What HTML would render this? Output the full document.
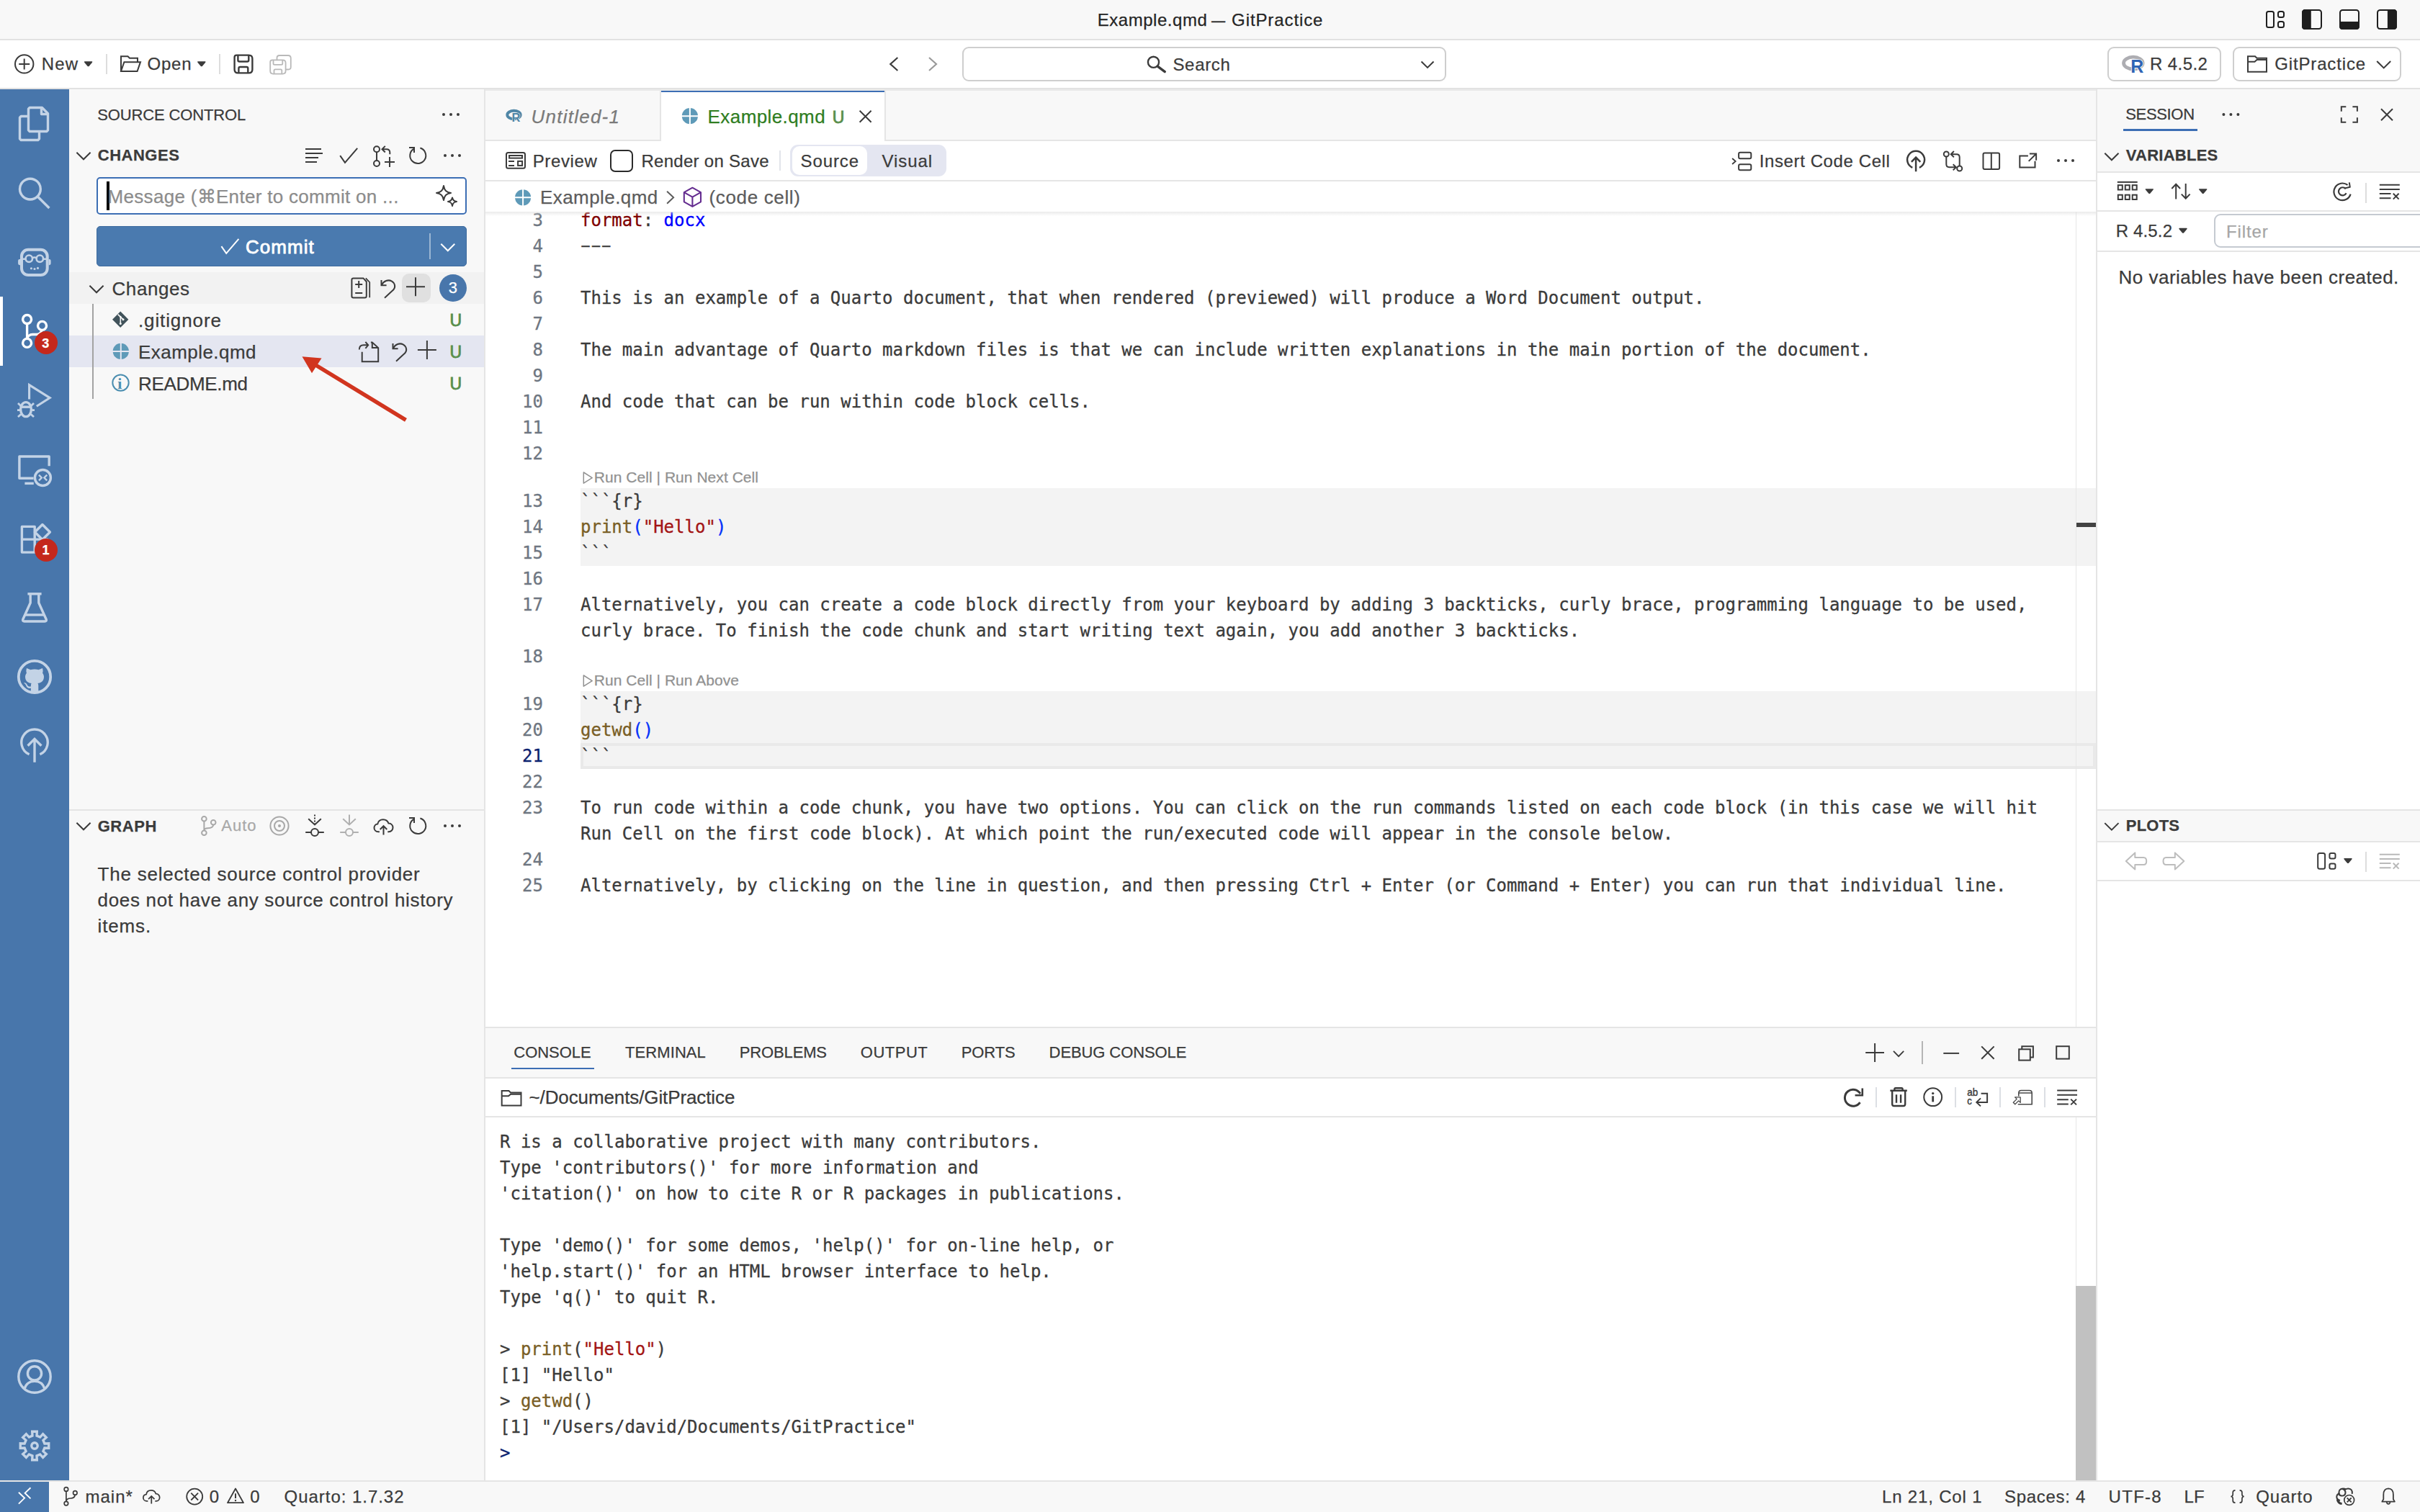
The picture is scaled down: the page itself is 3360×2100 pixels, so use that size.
<!DOCTYPE html><html lang="en"><head><meta charset="utf-8"><title>Example.qmd — GitPractice</title><style>
*{box-sizing:border-box;margin:0;padding:0}
html,body{width:3360px;height:2100px;overflow:hidden;background:#fff}
body{font-family:"Liberation Sans",sans-serif;font-size:26px;color:#3b3b3b;position:relative}
.a{position:absolute}
.t{position:absolute;white-space:pre;line-height:1;-webkit-text-stroke:0.25px currentColor}
.m{-webkit-text-stroke:0.3px currentColor}
svg{position:absolute;overflow:visible}
@media (max-width:1800px){html{zoom:.5}}
.m{font-family:"DejaVu Sans Mono","Liberation Mono",monospace}
</style></head><body>
<!-- sec_frame -->
<div class="a" style="left:0px;top:0px;width:3360px;height:54px;background:#f8f8f8;"></div>
<div class="a" style="left:0px;top:54px;width:3360px;height:2px;background:#e2e2e2;"></div>
<div class="a" style="left:0px;top:56px;width:3360px;height:66px;background:#ffffff;"></div>
<div class="a" style="left:0px;top:122px;width:3360px;height:2px;background:#e2e2e2;"></div>
<div class="a" style="left:0px;top:124px;width:96px;height:1932px;background:#4876ab;"></div>
<div class="a" style="left:96px;top:124px;width:576px;height:1932px;background:#f8f8f8;"></div>
<div class="a" style="left:672px;top:124px;width:2px;height:1932px;background:#e5e5e5;"></div>
<div class="a" style="left:674px;top:124px;width:2236px;height:1302px;background:#ffffff;"></div>
<div class="a" style="left:2910px;top:124px;width:2px;height:1932px;background:#e5e5e5;"></div>
<div class="a" style="left:2912px;top:124px;width:448px;height:1932px;background:#ffffff;"></div>
<div class="a" style="left:674px;top:1426px;width:2236px;height:2px;background:#e5e5e5;"></div>
<div class="a" style="left:674px;top:1428px;width:2236px;height:628px;background:#ffffff;"></div>
<div class="a" style="left:0px;top:2056px;width:3360px;height:44px;background:#f8f8f8;"></div>
<div class="a" style="left:0px;top:2056px;width:3360px;height:2px;background:#e5e5e5;"></div>
<!-- sec_top -->
<span class="t" style="left:1523.7px;top:16.0px;font-size:24px;color:#252525;letter-spacing:0.54px;">Example.qmd</span>
<span class="t" style="left:1682.3px;top:16.0px;font-size:24px;color:#252525;transform-origin:0 50%;transform:scaleX(0.8);">—</span>
<span class="t" style="left:1710.1px;top:16.0px;font-size:24px;color:#252525;letter-spacing:0.90px;">GitPractice</span>
<span class="t" style="left:57.7px;top:77.0px;font-size:24px;color:#3b3b3b;letter-spacing:1.20px;">New</span>
<span class="t" style="left:204.5px;top:77.0px;font-size:24px;color:#3b3b3b;letter-spacing:0.80px;">Open</span>
<div class="a" style="left:147px;top:75px;width:2px;height:28px;background:#dddddd;"></div>
<div class="a" style="left:304px;top:75px;width:2px;height:28px;background:#dddddd;"></div>
<div class="a" style="left:1336px;top:65px;width:672px;height:48px;background:#fff;border:2px solid #cecece;border-radius:9px;"></div>
<span class="t" style="left:1628.4px;top:78.0px;font-size:24px;color:#3b3b3b;letter-spacing:0.69px;">Search</span>
<div class="a" style="left:2926px;top:65px;width:158px;height:48px;background:#fff;border:2px solid #cecece;border-radius:9px;"></div>
<span class="t" style="left:2985.0px;top:77.4px;font-size:24px;color:#3b3b3b;letter-spacing:0.42px;">R 4.5.2</span>
<div class="a" style="left:3100px;top:65px;width:234px;height:48px;background:#fff;border:2px solid #cecece;border-radius:9px;"></div>
<span class="t" style="left:3158.2px;top:77.4px;font-size:24px;color:#3b3b3b;letter-spacing:0.86px;">GitPractice</span>
<!-- sec_activity -->
<svg class="a" style="left:24px;top:148px;" width="48" height="48" viewBox="0 0 24 24" fill="none" stroke="#c3d3e6" stroke-width="1.7" stroke-linejoin="round" stroke-linecap="butt"><path d="M7.75 1.6 L8.6 .75 H17.2 L21.25 4.8 V16.4 L20.4 17.25 H8.6 L7.75 16.4 Z"/><path d="M16.75 .9 V5.25 H21.1"/><path d="M7.75 6.75 H2.6 L1.75 7.6 V22.4 L2.6 23.25 H14.4 L15.25 22.4 V17.25"/></svg>
<svg class="a" style="left:24px;top:244px;" width="48" height="48" viewBox="0 0 24 24" fill="none" stroke="#c3d3e6" stroke-width="1.7" stroke-linejoin="round" stroke-linecap="butt"><circle cx="8.95" cy="9.3" r="7.2"/><path d="M14 14.4 L22.2 22.5"/></svg>
<svg class="a" style="left:24px;top:340px;" width="48" height="48" viewBox="0 0 24 24" fill="none" stroke="#c3d3e6" stroke-width="1.7" stroke-linejoin="round" stroke-linecap="butt"><rect x="3" y="3.4" width="17.85" height="17.6" rx="4.6" stroke-width="2"/><path d="M2 9.95 H1.6 Q.55 9.95 .55 11 V13.05 Q.55 14.1 1.6 14.1 H2 Z M21.85 9.95 H22.25 Q23.3 9.95 23.3 11 V13.05 Q23.3 14.1 22.25 14.1 H21.85 Z" fill="#c3d3e6" stroke="none"/><circle cx="8.15" cy="9.6" r="2.35" stroke-width="1.3"/><circle cx="15.65" cy="9.6" r="2.35" stroke-width="1.3"/><path d="M10.3 9.1 Q11.9 8.3 13.5 9.1 M3.8 9.85 H5.9 M17.9 9.85 H20" stroke-width="1.25"/><circle cx="9.7" cy="16.4" r=".78" fill="#c3d3e6" stroke="none"/><circle cx="12" cy="16.75" r=".78" fill="#c3d3e6" stroke="none"/><circle cx="14.25" cy="16.2" r=".78" fill="#c3d3e6" stroke="none"/></svg>
<div class="a" style="left:0px;top:412px;width:4px;height:96px;background:#ffffff;"></div>
<svg class="a" style="left:24px;top:436px;" width="48" height="48" viewBox="0 0 24 24" fill="none" stroke="#ffffff" stroke-width="1.7" stroke-linejoin="round" stroke-linecap="butt"><circle cx="6.8" cy="3.75" r="3"/><circle cx="17.27" cy="8.2" r="3"/><circle cx="6.8" cy="20.2" r="3"/><path d="M6.8 6.75 V17.2"/><path d="M17 11.2 C16.6 13.2 15 14.25 13.4 14.25 H10.6 C8.6 14.25 7 15.6 6.85 17.2"/></svg>
<div class="a" style="left:48px;top:460px;width:32px;height:32px;background:#c4281c;border-radius:16px;"></div>
<span class="t" style="left:58.3px;top:467.5px;font-size:18px;color:#fff;font-weight:700;">3</span>
<svg class="a" style="left:24px;top:532px;" width="48" height="48" viewBox="0 0 24 24" fill="none" stroke="#c3d3e6" stroke-width="1.7" stroke-linejoin="round" stroke-linecap="butt"><path d="M8.3 11.2 V1.3 L22.6 10.3 L13.4 16.1" stroke-linejoin="miter" stroke-width="1.55"/><ellipse cx="6" cy="18.3" rx="3.7" ry="5" /><path d="M2.6 16.6 H9.4" /><path d="M0.5 14 L2.6 16 M11.5 14 L9.4 16 M0 18.8 H2.3 M9.7 18.8 H12 M0.5 23.5 L2.6 21.6 M11.5 23.5 L9.4 21.6" stroke-width="1.4"/></svg>
<svg class="a" style="left:24px;top:628px;" width="48" height="48" viewBox="0 0 24 24" fill="none" stroke="#c3d3e6" stroke-width="1.7" stroke-linejoin="round" stroke-linecap="butt"><path d="M22.1 9.6 V3 H1.45 V18.1 H11.3"/><path d="M5.2 21.7 H11.4"/><circle cx="17.7" cy="17.75" r="5.5"/><path d="M15 15.8 L16.9 17.75 L15 19.7 M20.6 15.8 L18.7 17.75 L20.6 19.7" stroke-width="1.2" stroke-linejoin="miter"/></svg>
<svg class="a" style="left:24px;top:724px;" width="48" height="48" viewBox="0 0 24 24" fill="none" stroke="#c3d3e6" stroke-width="1.7" stroke-linejoin="round" stroke-linecap="butt"><path d="M3.2 3.7 H12.1 V21.55 H3.2 Z M3.2 12.55 H20.95 V21.55 H12.1"/><path d="M17.45 2.25 L22.7 7.5 L17.45 12.75 L12.2 7.5 Z"/></svg>
<div class="a" style="left:48px;top:748px;width:32px;height:32px;background:#c4281c;border-radius:16px;"></div>
<span class="t" style="left:58.4px;top:755.2px;font-size:18px;color:#fff;font-weight:700;">1</span>
<svg class="a" style="left:24px;top:820px;" width="48" height="48" viewBox="0 0 24 24" fill="none" stroke="#c3d3e6" stroke-width="1.7" stroke-linejoin="round" stroke-linecap="butt"><path d="M7.2 2.4 H16.8"/><path d="M9.1 2.4 V8.6 L3.9 20.1 C3.6 21 4 21.5 4.9 21.5 H19.1 C20 21.5 20.4 21 20.1 20.1 L14.9 8.6 V2.4"/><path d="M5.6 17 H18.4"/></svg>
<svg class="a" style="left:24px;top:916px;" width="48" height="48" viewBox="0 0 24 24" fill="none" stroke="#c3d3e6" stroke-width="1.7" stroke-linejoin="round" stroke-linecap="butt"><circle cx="12" cy="12" r="11.1" stroke-width="1.9"/><path d="M6.5 6 L9.2 7.1 C10.9 6.6 13.1 6.6 14.8 7.1 L17.5 6 C17.9 7.3 17.9 8.6 17.5 9.4 C18.2 10.3 18.5 11.2 18.5 12 C18.5 15.3 15.9 16.4 14.2 16.5 C14.5 16.9 14.65 17.4 14.65 18 V22.7 H9.45 V19.9 C7.5 20.2 6.6 19.4 6.1 18.1 C5.8 17.3 5.2 16.8 4.5 16.3 C5.4 15.9 6.4 16.6 6.9 17.6 C7.4 18.6 8.2 19 9.45 18.7 V18 C9.45 17.4 9.6 16.9 9.8 16.5 C8.1 16.4 5.5 15.3 5.5 12 C5.5 11.2 5.8 10.3 6.5 9.4 C6.1 8.6 6.1 7.3 6.5 6 Z" fill="#c3d3e6" stroke="none"/></svg>
<svg class="a" style="left:24px;top:1012px;" width="48" height="48" viewBox="0 0 24 24" fill="none" stroke="#c3d3e6" stroke-width="1.7" stroke-linejoin="round" stroke-linecap="butt"><path d="M8.3 17.9 A9.1 9.1 0 1 1 15.7 17.9"/><path d="M12 7.4 V23.4 M7.3 11.9 L12 7.2 L16.7 11.9" stroke-linejoin="miter"/></svg>
<svg class="a" style="left:24px;top:1888px;" width="48" height="48" viewBox="0 0 24 24" fill="none" stroke="#c3d3e6" stroke-width="1.7" stroke-linejoin="round" stroke-linecap="butt"><circle cx="12" cy="12" r="11.1"/><circle cx="12" cy="9.7" r="4.8"/><path d="M5 20.4 C6.2 16.6 9 15.2 12 15.2 C15 15.2 17.8 16.6 19 20.4"/></svg>
<svg class="a" style="left:24px;top:1984px;" width="48" height="48" viewBox="0 0 24 24" fill="none" stroke="#c3d3e6" stroke-width="1.7" stroke-linejoin="round" stroke-linecap="butt"><path d="M10.48 5.06 L10.36 2.14 L13.64 2.14 L13.52 5.06 L15.83 6.02 L17.81 3.86 L20.14 6.19 L17.98 8.17 L18.94 10.48 L21.86 10.36 L21.86 13.64 L18.94 13.52 L17.98 15.83 L20.14 17.81 L17.81 20.14 L15.83 17.98 L13.52 18.94 L13.64 21.86 L10.36 21.86 L10.48 18.94 L8.17 17.98 L6.19 20.14 L3.86 17.81 L6.02 15.83 L5.06 13.52 L2.14 13.64 L2.14 10.36 L5.06 10.48 L6.02 8.17 L3.86 6.19 L6.19 3.86 L8.17 6.02Z" stroke-linejoin="miter"/><circle cx="12" cy="12" r="2.1"/></svg>
<!-- sec_sidebar -->
<span class="t" style="left:135.2px;top:148.9px;font-size:22px;color:#3b3b3b;letter-spacing:-0.13px;">SOURCE CONTROL</span>
<span class="t" style="left:135.8px;top:205.4px;font-size:22px;color:#3b3b3b;font-weight:700;letter-spacing:0.50px;">CHANGES</span>
<div class="a" style="left:134px;top:246px;width:514px;height:52px;background:#fff;border:2px solid #3c6eb4;border-radius:5px;"></div>
<div class="a" style="left:148px;top:252px;width:4px;height:40px;background:#000;"></div>
<span class="t" style="left:149.6px;top:259.5px;font-size:26px;color:#8c8c8c;letter-spacing:0.30px;">Message (⌘Enter to commit on ...</span>
<div class="a" style="left:134px;top:314px;width:514px;height:56px;background:#4a7aaf;border-radius:5px;border:1.5px solid #3d6b9f;"></div>
<span class="t" style="left:340.9px;top:329.8px;font-size:26px;color:#fff;letter-spacing:1.05px;-webkit-text-stroke:0.8px #fff;">Commit</span>
<div class="a" style="left:596px;top:324px;width:2px;height:36px;background:rgba(255,255,255,.45);"></div>
<div class="a" style="left:96px;top:378px;width:576px;height:44px;background:#f2f2f2;"></div>
<span class="t" style="left:155.5px;top:387.8px;font-size:26px;color:#3b3b3b;letter-spacing:0.58px;">Changes</span>
<div class="a" style="left:558px;top:380px;width:40px;height:40px;background:#e0e0e0;border-radius:10px;"></div>
<div class="a" style="left:610px;top:381px;width:38px;height:38px;background:#4876ab;border-radius:19px;"></div>
<span class="t" style="left:622.7px;top:388.9px;font-size:22px;color:#fff;">3</span>
<div class="a" style="left:96px;top:466px;width:576px;height:44px;background:#e4e6f1;"></div>
<div class="a" style="left:128px;top:422px;width:2px;height:132px;background:#a3a3a3;"></div>
<span class="t" style="left:192.0px;top:431.7px;font-size:26px;color:#3b3b3b;letter-spacing:0.88px;">.gitignore</span>
<span class="t" style="left:192.0px;top:475.7px;font-size:26px;color:#3b3b3b;letter-spacing:0.45px;">Example.qmd</span>
<span class="t" style="left:192.0px;top:519.7px;font-size:26px;color:#3b3b3b;letter-spacing:-0.32px;">README.md</span>
<span class="t" style="left:624.5px;top:433.5px;font-size:23px;color:#5a8f4c;letter-spacing:0.09px;-webkit-text-stroke:0.85px #5a8f4c;">U</span>
<span class="t" style="left:624.5px;top:477.5px;font-size:23px;color:#5a8f4c;letter-spacing:0.09px;-webkit-text-stroke:0.85px #5a8f4c;">U</span>
<span class="t" style="left:624.5px;top:521.5px;font-size:23px;color:#5a8f4c;letter-spacing:0.09px;-webkit-text-stroke:0.85px #5a8f4c;">U</span>
<div class="a" style="left:96px;top:1124px;width:576px;height:2px;background:#e5e5e5;"></div>
<span class="t" style="left:135.7px;top:1136.9px;font-size:22px;color:#3b3b3b;font-weight:700;letter-spacing:0.54px;">GRAPH</span>
<span class="t" style="left:307.3px;top:1136.2px;font-size:22px;color:#a8a8a8;letter-spacing:0.98px;">Auto</span>
<span class="t" style="left:135.6px;top:1201.0px;font-size:26px;color:#3b3b3b;letter-spacing:0.76px;">The selected source control provider</span>
<span class="t" style="left:135.6px;top:1237.0px;font-size:26px;color:#3b3b3b;letter-spacing:0.67px;">does not have any source control history</span>
<span class="t" style="left:135.6px;top:1273.0px;font-size:26px;color:#3b3b3b;letter-spacing:0.85px;">items.</span>
<!-- sec_editor -->
<div class="a" style="left:674px;top:124px;width:2236px;height:70px;background:#f8f8f8;"></div>
<div class="a" style="left:674px;top:124px;width:2236px;height:2px;background:#e9e9e9;"></div>
<div class="a" style="left:674px;top:194px;width:2236px;height:2px;background:#e5e5e5;"></div>
<div class="a" style="left:916px;top:126px;width:2px;height:68px;background:#e5e5e5;"></div>
<span class="t" style="left:737.6px;top:149.2px;font-size:26px;color:#7a7a7a;font-style:italic;letter-spacing:1.23px;">Untitled-1</span>
<div class="a" style="left:918px;top:126px;width:310px;height:70px;background:#ffffff;"></div>
<div class="a" style="left:918px;top:126px;width:310px;height:2px;background:#3c6eb4;"></div>
<div class="a" style="left:1228px;top:126px;width:2px;height:68px;background:#e5e5e5;"></div>
<span class="t" style="left:982.6px;top:149.3px;font-size:26px;color:#2f7d21;letter-spacing:0.41px;">Example.qmd</span>
<span class="t" style="left:1155.7px;top:151.5px;font-size:23px;color:#5a8f4c;letter-spacing:0.59px;-webkit-text-stroke:0.85px #5a8f4c;">U</span>
<div class="a" style="left:674px;top:250px;width:2236px;height:2px;background:#e5e5e5;"></div>
<span class="t" style="left:739.7px;top:211.7px;font-size:24px;color:#3b3b3b;letter-spacing:0.62px;">Preview</span>
<div class="a" style="left:847px;top:207.5px;width:31.5px;height:31.5px;background:#fff;border:2.2px solid #2b2b2b;border-radius:7px;"></div>
<span class="t" style="left:890.4px;top:211.7px;font-size:24px;color:#3b3b3b;letter-spacing:0.29px;">Render on Save</span>
<div class="a" style="left:1082px;top:209px;width:2px;height:28px;background:#e2e4ea;"></div>
<div class="a" style="left:1097px;top:201px;width:216.5px;height:43.5px;background:#e4e6f1;border-radius:11px;"></div>
<div class="a" style="left:1100px;top:203px;width:103.8px;height:39.8px;background:#ffffff;border-radius:10px;"></div>
<span class="t" style="left:1111.6px;top:211.7px;font-size:24px;color:#3b3b3b;letter-spacing:0.89px;">Source</span>
<span class="t" style="left:1224.6px;top:211.7px;font-size:24px;color:#3b3b3b;letter-spacing:0.90px;">Visual</span>
<span class="t" style="left:2442.8px;top:211.7px;font-size:24px;color:#3b3b3b;letter-spacing:0.60px;">Insert Code Cell</span>
<span class="t" style="left:750.0px;top:261.0px;font-size:26px;color:#5c5c5c;letter-spacing:0.43px;">Example.qmd</span>
<span class="t" style="left:984.5px;top:261.0px;font-size:26px;color:#5c5c5c;letter-spacing:0.65px;">(code cell)</span>
<div class="a" style="left:674px;top:294px;width:2236px;height:1132px;overflow:hidden">
<div class="a" style="left:-674px;top:-294px;width:3360px;height:2100px">
<div class="a" style="left:806px;top:678px;width:2104px;height:108px;background:#f3f3f3;"></div>
<div class="a" style="left:806px;top:960px;width:2104px;height:108px;background:#f3f3f3;"></div>
<div class="a" style="left:806px;top:1032px;width:2104px;height:36px;border:4px solid #e9e9e9;"></div>
<div class="a" style="left:2882px;top:294px;width:1.2px;height:1132px;background:#e6e6e6;"></div>
<div class="a" style="left:2883px;top:726px;width:27px;height:6px;background:#424242;"></div>
<span class="t m" style="left:739.5px;top:293.7px;font-size:24px;color:#6e7681;letter-spacing:-0.00px;">3</span>
<span class="t m" style="left:739.5px;top:329.7px;font-size:24px;color:#6e7681;letter-spacing:-0.00px;">4</span>
<span class="t m" style="left:739.5px;top:365.7px;font-size:24px;color:#6e7681;letter-spacing:-0.00px;">5</span>
<span class="t m" style="left:739.5px;top:401.7px;font-size:24px;color:#6e7681;letter-spacing:-0.00px;">6</span>
<span class="t m" style="left:739.5px;top:437.7px;font-size:24px;color:#6e7681;letter-spacing:-0.00px;">7</span>
<span class="t m" style="left:739.5px;top:473.7px;font-size:24px;color:#6e7681;letter-spacing:-0.00px;">8</span>
<span class="t m" style="left:739.5px;top:509.7px;font-size:24px;color:#6e7681;letter-spacing:-0.00px;">9</span>
<span class="t m" style="left:725.1px;top:545.7px;font-size:24px;color:#6e7681;letter-spacing:-0.00px;">10</span>
<span class="t m" style="left:725.1px;top:581.7px;font-size:24px;color:#6e7681;letter-spacing:-0.00px;">11</span>
<span class="t m" style="left:725.1px;top:617.7px;font-size:24px;color:#6e7681;letter-spacing:-0.00px;">12</span>
<span class="t m" style="left:725.1px;top:683.7px;font-size:24px;color:#6e7681;letter-spacing:-0.00px;">13</span>
<span class="t m" style="left:725.1px;top:719.7px;font-size:24px;color:#6e7681;letter-spacing:-0.00px;">14</span>
<span class="t m" style="left:725.1px;top:755.7px;font-size:24px;color:#6e7681;letter-spacing:-0.00px;">15</span>
<span class="t m" style="left:725.1px;top:791.7px;font-size:24px;color:#6e7681;letter-spacing:-0.00px;">16</span>
<span class="t m" style="left:725.1px;top:827.7px;font-size:24px;color:#6e7681;letter-spacing:-0.00px;">17</span>
<span class="t m" style="left:725.1px;top:899.7px;font-size:24px;color:#6e7681;letter-spacing:-0.00px;">18</span>
<span class="t m" style="left:725.1px;top:965.7px;font-size:24px;color:#6e7681;letter-spacing:-0.00px;">19</span>
<span class="t m" style="left:725.1px;top:1001.7px;font-size:24px;color:#6e7681;letter-spacing:-0.00px;">20</span>
<span class="t m" style="left:725.1px;top:1037.7px;font-size:24px;color:#0b216f;letter-spacing:-0.00px;">21</span>
<span class="t m" style="left:725.1px;top:1073.7px;font-size:24px;color:#6e7681;letter-spacing:-0.00px;">22</span>
<span class="t m" style="left:725.1px;top:1109.7px;font-size:24px;color:#6e7681;letter-spacing:-0.00px;">23</span>
<span class="t m" style="left:725.1px;top:1181.7px;font-size:24px;color:#6e7681;letter-spacing:-0.00px;">24</span>
<span class="t m" style="left:725.1px;top:1217.7px;font-size:24px;color:#6e7681;letter-spacing:-0.00px;">25</span>
<span class="t m" style="left:806.0px;top:293.7px;font-size:24px;color:#800000;letter-spacing:-0.00px;">format</span><span class="t m" style="left:892.7px;top:293.7px;font-size:24px;color:#3b3b3b;letter-spacing:-0.00px;">:</span><span class="t m" style="left:907.2px;top:293.7px;font-size:24px;color:#3b3b3b;letter-spacing:-0.00px;"> </span><span class="t m" style="left:921.6px;top:293.7px;font-size:24px;color:#0000ff;letter-spacing:-0.00px;">docx</span>
<span class="t m" style="left:799.8px;top:328.9px;font-size:24px;color:#3b3b3b;letter-spacing:-6.43px;transform-origin:0 50%;transform:scale(1.8,0.85);">---</span>
<span class="t m" style="left:806.0px;top:401.7px;font-size:24px;color:#3b3b3b;letter-spacing:-0.00px;">This is an example of a Quarto document, that when rendered (previewed) will produce a Word Document output.</span>
<span class="t m" style="left:806.0px;top:473.7px;font-size:24px;color:#3b3b3b;letter-spacing:-0.00px;">The main advantage of Quarto markdown files is that we can include written explanations in the main portion of the document.</span>
<span class="t m" style="left:806.0px;top:545.7px;font-size:24px;color:#3b3b3b;letter-spacing:-0.00px;">And code that can be run within code block cells.</span>
<span class="t m" style="left:806.0px;top:683.7px;font-size:24px;color:#3b3b3b;letter-spacing:-0.00px;">```{r}</span>
<span class="t m" style="left:806.0px;top:719.7px;font-size:24px;color:#795e26;letter-spacing:-0.00px;">print</span><span class="t m" style="left:878.2px;top:719.7px;font-size:24px;color:#0431fa;letter-spacing:-0.00px;">(</span><span class="t m" style="left:892.7px;top:719.7px;font-size:24px;color:#a31515;letter-spacing:-0.00px;">"Hello"</span><span class="t m" style="left:993.9px;top:719.7px;font-size:24px;color:#0431fa;letter-spacing:-0.00px;">)</span>
<span class="t m" style="left:806.0px;top:755.7px;font-size:24px;color:#3b3b3b;letter-spacing:-0.00px;">```</span>
<span class="t m" style="left:806.0px;top:827.7px;font-size:24px;color:#3b3b3b;letter-spacing:-0.00px;">Alternatively, you can create a code block directly from your keyboard by adding 3 backticks, curly brace, programming language to be used,</span>
<span class="t m" style="left:806.0px;top:863.7px;font-size:24px;color:#3b3b3b;letter-spacing:-0.00px;">curly brace. To finish the code chunk and start writing text again, you add another 3 backticks.</span>
<span class="t m" style="left:806.0px;top:965.7px;font-size:24px;color:#3b3b3b;letter-spacing:-0.00px;">```{r}</span>
<span class="t m" style="left:806.0px;top:1001.7px;font-size:24px;color:#795e26;letter-spacing:-0.00px;">getwd</span><span class="t m" style="left:878.2px;top:1001.7px;font-size:24px;color:#0431fa;letter-spacing:-0.00px;">()</span>
<span class="t m" style="left:806.0px;top:1037.7px;font-size:24px;color:#3b3b3b;letter-spacing:-0.00px;">```</span>
<span class="t m" style="left:806.0px;top:1109.7px;font-size:24px;color:#3b3b3b;letter-spacing:-0.00px;">To run code within a code chunk, you have two options. You can click on the run commands listed on each code block (in this case we will hit</span>
<span class="t m" style="left:806.0px;top:1145.7px;font-size:24px;color:#3b3b3b;letter-spacing:-0.00px;">Run Cell on the first code block). At which point the run/executed code will appear in the console below.</span>
<span class="t m" style="left:806.0px;top:1217.7px;font-size:24px;color:#3b3b3b;letter-spacing:-0.00px;">Alternatively, by clicking on the line in question, and then pressing Ctrl + Enter (or Command + Enter) you can run that individual line.</span>
<span class="t" style="left:824.8px;top:652.1px;font-size:21px;color:#919191;letter-spacing:0.04px;">Run Cell | Run Next Cell</span>
<span class="t" style="left:824.8px;top:934.1px;font-size:21px;color:#919191;letter-spacing:0.04px;">Run Cell | Run Above</span>
</div></div>
<div class="a" style="left:674px;top:294px;width:2236px;height:6px;background:linear-gradient(#dddddd99,#dddddd00);"></div>
<!-- sec_right -->
<div class="a" style="left:2912px;top:124px;width:448px;height:114px;background:#f8f8f8;"></div>
<span class="t" style="left:2951.2px;top:148.4px;font-size:22px;color:#3b3b3b;letter-spacing:-0.33px;">SESSION</span>
<div class="a" style="left:2948px;top:179px;width:103px;height:3px;background:#3c6eb4;"></div>
<span class="t" style="left:2951.8px;top:205.4px;font-size:22px;color:#3b3b3b;font-weight:700;letter-spacing:0.25px;">VARIABLES</span>
<div class="a" style="left:2912px;top:238px;width:448px;height:2px;background:#e5e5e5;"></div>
<div class="a" style="left:2912px;top:292px;width:448px;height:2px;background:#e5e5e5;"></div>
<div class="a" style="left:3284px;top:254px;width:2px;height:28px;background:#dddddd;"></div>
<span class="t" style="left:2937.8px;top:309.4px;font-size:24px;color:#3b3b3b;letter-spacing:0.14px;">R 4.5.2</span>
<div class="a" style="left:3073.5px;top:297.2px;width:300px;height:47.2px;background:#fff;border:2px solid #c5cad1;border-radius:9px;"></div>
<span class="t" style="left:3091.1px;top:309.6px;font-size:24px;color:#a6a6a6;letter-spacing:0.85px;">Filter</span>
<div class="a" style="left:2912px;top:348px;width:448px;height:2px;background:#e5e5e5;"></div>
<span class="t" style="left:2941.6px;top:371.5px;font-size:26px;color:#3b3b3b;letter-spacing:0.48px;">No variables have been created.</span>
<div class="a" style="left:2912px;top:1124px;width:448px;height:2px;background:#e5e5e5;"></div>
<div class="a" style="left:2912px;top:1126px;width:448px;height:42px;background:#f8f8f8;"></div>
<div class="a" style="left:2912px;top:1168px;width:448px;height:2px;background:#e5e5e5;"></div>
<span class="t" style="left:2951.8px;top:1136.4px;font-size:22px;color:#3b3b3b;font-weight:700;letter-spacing:0.22px;">PLOTS</span>
<div class="a" style="left:2912px;top:1222px;width:448px;height:2px;background:#e5e5e5;"></div>
<div class="a" style="left:3284px;top:1183px;width:2px;height:28px;background:#dddddd;"></div>
<!-- sec_panel -->
<div class="a" style="left:674px;top:1428px;width:2236px;height:68px;background:#f8f8f8;"></div>
<div class="a" style="left:674px;top:1496px;width:2236px;height:2px;background:#e5e5e5;"></div>
<span class="t" style="left:713.3px;top:1450.9px;font-size:22px;color:#3b3b3b;letter-spacing:-0.03px;">CONSOLE</span>
<span class="t" style="left:868.1px;top:1450.9px;font-size:22px;color:#3b3b3b;letter-spacing:0.07px;">TERMINAL</span>
<span class="t" style="left:1026.8px;top:1450.9px;font-size:22px;color:#3b3b3b;letter-spacing:-0.15px;">PROBLEMS</span>
<span class="t" style="left:1194.8px;top:1450.9px;font-size:22px;color:#3b3b3b;letter-spacing:0.51px;">OUTPUT</span>
<span class="t" style="left:1334.7px;top:1450.9px;font-size:22px;color:#3b3b3b;letter-spacing:-0.10px;">PORTS</span>
<span class="t" style="left:1456.6px;top:1450.9px;font-size:22px;color:#3b3b3b;letter-spacing:-0.10px;">DEBUG CONSOLE</span>
<div class="a" style="left:710px;top:1483px;width:115px;height:2px;background:#3c6eb4;"></div>
<span class="t" style="left:734.5px;top:1511.0px;font-size:26px;color:#3b3b3b;letter-spacing:-0.11px;">~/Documents/GitPractice</span>
<div class="a" style="left:674px;top:1550px;width:2236px;height:2px;background:#e5e5e5;"></div>
<div class="a" style="left:2604px;top:1510px;width:2px;height:28px;background:#dcdfe4;"></div>
<div class="a" style="left:2714px;top:1510px;width:2px;height:28px;background:#dcdfe4;"></div>
<div class="a" style="left:2776px;top:1510px;width:2px;height:28px;background:#dcdfe4;"></div>
<div class="a" style="left:2838px;top:1510px;width:2px;height:28px;background:#dcdfe4;"></div>
<div class="a" style="left:2668px;top:1446px;width:2px;height:32px;background:#b5b5b5;"></div>
<span class="t m" style="left:694.0px;top:1573.7px;font-size:24px;color:#3b3b3b;letter-spacing:-0.00px;">R is a collaborative project with many contributors.</span>
<span class="t m" style="left:694.0px;top:1609.7px;font-size:24px;color:#3b3b3b;letter-spacing:-0.00px;">Type 'contributors()' for more information and</span>
<span class="t m" style="left:694.0px;top:1645.7px;font-size:24px;color:#3b3b3b;letter-spacing:-0.00px;">'citation()' on how to cite R or R packages in publications.</span>
<span class="t m" style="left:694.0px;top:1717.7px;font-size:24px;color:#3b3b3b;letter-spacing:-0.00px;">Type 'demo()' for some demos, 'help()' for on-line help, or</span>
<span class="t m" style="left:694.0px;top:1753.7px;font-size:24px;color:#3b3b3b;letter-spacing:-0.00px;">'help.start()' for an HTML browser interface to help.</span>
<span class="t m" style="left:694.0px;top:1789.7px;font-size:24px;color:#3b3b3b;letter-spacing:-0.00px;">Type 'q()' to quit R.</span>
<span class="t m" style="left:694.0px;top:1861.7px;font-size:24px;color:#3b3b3b;letter-spacing:-0.00px;">&gt; </span><span class="t m" style="left:722.9px;top:1861.7px;font-size:24px;color:#795e26;letter-spacing:-0.00px;">print</span><span class="t m" style="left:795.1px;top:1861.7px;font-size:24px;color:#3b3b3b;letter-spacing:-0.00px;">(</span><span class="t m" style="left:809.6px;top:1861.7px;font-size:24px;color:#a31515;letter-spacing:-0.00px;">"Hello"</span><span class="t m" style="left:910.8px;top:1861.7px;font-size:24px;color:#3b3b3b;letter-spacing:-0.00px;">)</span>
<span class="t m" style="left:694.0px;top:1897.7px;font-size:24px;color:#3b3b3b;letter-spacing:-0.00px;">[1] "Hello"</span>
<span class="t m" style="left:694.0px;top:1933.7px;font-size:24px;color:#3b3b3b;letter-spacing:-0.00px;">&gt; </span><span class="t m" style="left:722.9px;top:1933.7px;font-size:24px;color:#795e26;letter-spacing:-0.00px;">getwd</span><span class="t m" style="left:795.1px;top:1933.7px;font-size:24px;color:#3b3b3b;letter-spacing:-0.00px;">()</span>
<span class="t m" style="left:694.0px;top:1969.7px;font-size:24px;color:#3b3b3b;letter-spacing:-0.00px;">[1] "/Users/david/Documents/GitPractice"</span>
<span class="t m" style="left:694.0px;top:2005.7px;font-size:24px;color:#0b216f;letter-spacing:-0.00px;">&gt;</span>
<div class="a" style="left:2882px;top:1552px;width:1.2px;height:504px;background:#e6e6e6;"></div>
<div class="a" style="left:2882px;top:1786px;width:28px;height:270px;background:#c1c1c1;"></div>
<!-- sec_status -->
<div class="a" style="left:0px;top:2058px;width:68px;height:42px;background:#4876ab;"></div>
<span class="t" style="left:118.5px;top:2066.7px;font-size:24px;color:#3b3b3b;letter-spacing:0.99px;">main*</span>
<span class="t" style="left:290.7px;top:2066.7px;font-size:24px;color:#3b3b3b;">0</span>
<span class="t" style="left:347.3px;top:2066.7px;font-size:24px;color:#3b3b3b;">0</span>
<span class="t" style="left:394.6px;top:2066.7px;font-size:24px;color:#3b3b3b;letter-spacing:0.96px;">Quarto: 1.7.32</span>
<span class="t" style="left:2613.0px;top:2066.7px;font-size:24px;color:#3b3b3b;letter-spacing:0.83px;">Ln 21, Col 1</span>
<span class="t" style="left:2782.9px;top:2066.7px;font-size:24px;color:#3b3b3b;letter-spacing:0.73px;">Spaces: 4</span>
<span class="t" style="left:2927.6px;top:2066.7px;font-size:24px;color:#3b3b3b;letter-spacing:1.28px;">UTF-8</span>
<span class="t" style="left:3032.5px;top:2066.7px;font-size:24px;color:#3b3b3b;letter-spacing:0.10px;">LF</span>
<span class="t" style="left:3132.2px;top:2066.7px;font-size:24px;color:#3b3b3b;letter-spacing:0.99px;">Quarto</span>
<svg class="a" style="left:0;top:0" width="3360" height="2100" viewBox="0 0 3360 2100" fill="none" stroke="#3b3b3b" stroke-width="2" stroke-linecap="butt" stroke-linejoin="miter">
<!-- sec_top icons --><g><rect x="3147" y="16" width="10" height="22" rx="2.5" stroke="#1f1f1f"/><rect x="3163" y="16" width="8" height="8" rx="2.5" stroke="#1f1f1f"/><rect x="3163" y="30" width="8" height="8" rx="2.5" stroke="#1f1f1f"/>
<rect x="3197" y="14" width="26" height="26" rx="3.5" stroke="#1f1f1f"/><path d="M3197 17.5 Q3197 14 3200.5 14 H3207.8 V40 H3200.5 Q3197 40 3197 36.5Z" fill="#1f1f1f" stroke="#1f1f1f"/>
<rect x="3249" y="14" width="26" height="26" rx="3.5" stroke="#1f1f1f"/><path d="M3249 30.9 H3275 V36.5 Q3275 40 3271.5 40 H3252.5 Q3249 40 3249 36.5Z" fill="#1f1f1f" stroke="#1f1f1f"/>
<rect x="3301" y="14" width="26" height="26" rx="3.5" stroke="#1f1f1f"/><path d="M3315.9 14 H3323.5 Q3327 14 3327 17.5 V36.5 Q3327 40 3323.5 40 H3315.9Z" fill="#1f1f1f" stroke="#1f1f1f"/>
<circle cx="33.7" cy="88.9" r="12.7"/><path d="M26.2 88.9 H41.2 M33.7 81.4 V96.4"/>
<path d="M117.6 85.3 H127.6 Q129.1 85.3 127.8 86.89999999999999 L123.6 91.89999999999999 Q122.6 92.7 121.6 91.89999999999999 L117.39999999999999 86.89999999999999 Q116.1 85.3 117.6 85.3Z" fill="#3b3b3b" stroke="none"/>
<path d="M168 99 V78.2 H177.5 L180 80.7 H191 V86.2 M168 99 L172.4 86.2 H195 L190.6 99 Z" stroke-linejoin="miter"/>
<path d="M274.8 85.3 H284.8 Q286.3 85.3 285.0 86.89999999999999 L280.8 91.89999999999999 Q279.8 92.7 278.8 91.89999999999999 L274.6 86.89999999999999 Q273.3 85.3 274.8 85.3Z" fill="#3b3b3b" stroke="none"/>
<path d="M328.4 76.6 H345.5 Q350.4 76.6 350.4 81.5 V96.6 Q350.4 101.4 345.5 101.4 H330.4 Q325.6 101.4 325.6 96.6 V79.4 Q325.6 76.6 328.4 76.6 Z M330.4 77 V83.5 Q330.4 85.5 332.4 85.5 H343.3 Q345.3 85.5 345.3 83.5 V77 M331.4 101 V95 Q331.4 93 333.4 93 H342.3 Q344.3 93 344.3 95 V101" stroke-width="2.4"/>
<path d="M384.5 83.5 V80.5 Q384.5 77 388 77 H400 Q403.8 77 403.8 80.8 V93 Q403.8 96.5 400.3 96.5 H397" stroke="#b9b9b9" stroke-width="1.8"/>
<path d="M378 83.3 H392.5 Q396.6 83.3 396.6 87.4 V98.6 Q396.6 102.6 392.5 102.6 H379.2 Q375.2 102.6 375.2 98.6 V86 Q375.2 83.3 378 83.3 Z M379.5 83.6 V88.2 Q379.5 89.8 381.1 89.8 H390.7 Q392.3 89.8 392.3 88.2 V83.6 M380.5 102.3 V98 Q380.5 96.4 382.1 96.4 H389.7 Q391.3 96.4 391.3 98 V102.3" stroke="#b9b9b9" stroke-width="1.8"/>
<path d="M1246.3 80.0 L1236.3 89 L1246.3 98.0" stroke-width="2.2"/>
<path d="M1290.0 80.0 L1300.0 89 L1290.0 98.0" stroke="#9a9a9a" stroke-width="2.2"/>
<circle cx="1601.5" cy="86.3" r="7.6" stroke-width="2.4"/><path d="M1607.3 92.1 L1617.3 99.6" stroke-width="3.4" stroke-linecap="round"/>
<path d="M1973.5 85.45 L1982 93.95 L1990.5 85.45"/>
<ellipse cx="2961.8" cy="87.6" rx="13.3" ry="8.4" stroke="#adadb2" stroke-width="4.8"/>
<text x="2958.2" y="101.2" font-family="Liberation Sans, sans-serif" font-weight="700" font-size="25" fill="#2f64b4" stroke="#ffffff" stroke-width="1.6" paint-order="stroke">R</text>
<path d="M3121 78.2 H3131 L3133.5 80.7 H3147 V99.7 H3121 Z M3121 85.7 H3130.5 L3133.5 83.0 H3147"/>
<path d="M3300.2 84.95 L3309.7 94.45 L3319.2 84.95"/></g>
<!-- sec_sidebar icons --><g><g color="#3b3b3b">
<g transform="translate(610 143) scale(2)" stroke-width="1"><circle cx="3" cy="8" r="1" fill="currentColor" stroke="none"/><circle cx="8" cy="8" r="1" fill="currentColor" stroke="none"/><circle cx="13" cy="8" r="1" fill="currentColor" stroke="none"/></g>
<g transform="translate(100 200.5) scale(2)" stroke-width="1"><path d="M3.2 5.6 L8 10.4 L12.8 5.6"/></g>
<g transform="translate(420 200) scale(2)" stroke-width="1"><path d="M2 3.5 H13 M2 6.5 H14 M2 9.5 H11 M2 12.5 H10"/></g>
<g transform="translate(468 200) scale(2)" stroke-width="1"><path d="M2.1 8.1 L5.5 12.9 L14.1 2.9"/></g>
<g transform="translate(516 200) scale(2)" stroke-width="1"><circle cx="3.5" cy="3.6" r="2"/><circle cx="3.5" cy="13.5" r="2"/><path d="M3.5 5.6 V11.5"/><path d="M9.4 1.45 L7.25 3.6 L9.4 5.75 M7.4 3.6 H10.4 Q12.65 3.6 12.65 5.9 V7.1"/><path d="M9 12.45 H16 M12.5 8.95 V15.95"/></g>
<g transform="translate(564 200) scale(2)" stroke-width="1"><path d="M2 2.5 H5.5 V6"/><path d="M5.1 3.45 A5.5 5.5 0 1 0 9.7 2.77"/></g>
<g transform="translate(612 200) scale(2)" stroke-width="1"><circle cx="3" cy="8" r="1" fill="currentColor" stroke="none"/><circle cx="8" cy="8" r="1" fill="currentColor" stroke="none"/><circle cx="13" cy="8" r="1" fill="currentColor" stroke="none"/></g>
<g transform="translate(602 256) scale(2)" stroke-width="1"><path d="M7 1 C7.5 4.2 8.8 5.5 12 6 C8.8 6.5 7.5 7.8 7 11 C6.5 7.8 5.2 6.5 2 6 C5.2 5.5 6.5 4.2 7 1 Z" stroke-linejoin="round"/><path d="M13 9.2 C13.3 11 14 11.7 16 12 C14 12.3 13.3 13 13 15 C12.7 13 12 12.3 10 12 C12 11.7 12.7 11 13 9.2 Z" stroke-linejoin="round"/></g>
<g transform="translate(303.2 326) scale(2)" stroke-width="1" stroke="#fff"><path d="M2.1 8.1 L5.5 12.9 L14.1 2.9"/></g>
<path d="M612.3 338.75 L621.8 348.25 L631.3 338.75" stroke="#fff"/>
<g transform="translate(118 385.5) scale(2)" stroke-width="1"><path d="M3.2 5.6 L8 10.4 L12.8 5.6"/></g>
<g transform="translate(486 384) scale(2)" stroke-width="1"><path d="M1.2 2.3 Q1.2 1.2 2.3 1.2 H9.2 L11.4 3.6 V13.6 Q11.4 14.7 10.3 14.7 H2.3 Q1.2 14.7 1.2 13.6 Z"/><path d="M10.9 1.2 L13.6 4 V14.6" stroke-width="0.9"/><path d="M3.6 5.5 H8.6 M6.1 3 V8 M3.6 11.5 H8.6" stroke-width="1"/></g>
<g transform="translate(524 384.3) scale(2)" stroke-width="1"><path d="M2.75 2.4 V5.95 H6.3"/><path d="M2.9 5.8 C4.3 2.9 7.5 1.7 10 3.2 C12.3 4.6 12.7 7.3 11.2 9 L5 14.7"/></g>
<g transform="translate(561 383.1) scale(2)" stroke-width="1"><path d="M1.5 7.55 H14.5 M8 1.05 V14.05"/></g>
<path d="M167.2 432.6 L178.4 443.8 L167.2 455 L156 443.8 Z" fill="#41535b" stroke="none"/>
<path d="M163.7 436.6 L170.6 443.4 M167.3 440.3 V449.3" stroke="#f8f8f8" stroke-width="1.6"/><circle cx="167.3" cy="449.6" r="1.5" fill="#f8f8f8" stroke="none"/><circle cx="171" cy="443.8" r="1.5" fill="#f8f8f8" stroke="none"/><circle cx="167.3" cy="440" r="1.3" fill="#f8f8f8" stroke="none"/>
<circle cx="167.8" cy="487.9" r="11.1" fill="#5e9ab8" stroke="none"/><path d="M155.70000000000002 487.9 H179.9 M167.8 475.79999999999995 V500.0" stroke="#e4e6f1" stroke-width="2"/>
<circle cx="167.5" cy="531.6" r="11.2" stroke="#4b8eb0" stroke-width="2"/>
<text x="163.2" y="539.5" font-family="Liberation Serif, serif" font-weight="700" font-size="22" fill="#4b8eb0" stroke="none">i</text>
<g transform="translate(495.7 471.3) scale(2)" stroke-width="1"><path d="M3.5 8.7 V15.45 H14.75 V5.9 L10.55 2.15 H9.6"/><path d="M10.55 2.3 V5.9 H14.6"/><path d="M1.55 7.15 Q1.55 4 4.6 4 H7.6 M5.85 1.8 L7.75 4 L5.85 6.3"/></g>
<g transform="translate(540 472.3) scale(2)" stroke-width="1"><path d="M2.75 2.4 V5.95 H6.3"/><path d="M2.9 5.8 C4.3 2.9 7.5 1.7 10 3.2 C12.3 4.6 12.7 7.3 11.2 9 L5 14.7"/></g>
<g transform="translate(576.9 470.8) scale(2)" stroke-width="1"><path d="M1.5 7.55 H14.5 M8 1.05 V14.05"/></g>
</g>
<path d="M563.5 583.3 L439 507.5" stroke="#d1351f" stroke-width="5.5"/>
<path d="M419.5 495.2 L446.5 497.5 L433 518.3 Z" fill="#d1351f" stroke="none"/>
<g color="#3b3b3b">
<g transform="translate(100 1131.5) scale(2)" stroke-width="1"><path d="M3.2 5.6 L8 10.4 L12.8 5.6"/></g>
<g color="#a8a8a8"><g transform="translate(275 1131) scale(2)" stroke-width="1" stroke="#a8a8a8"><circle cx="4.2" cy="3.1" r="1.65"/><circle cx="10.6" cy="5.6" r="1.65"/><circle cx="4.2" cy="12.9" r="1.65"/><path d="M4.2 4.75 V11.25 M10.6 7.25 C10.4 9.3 8.5 9.6 6.8 9.6 C5.3 9.6 4.3 10.3 4.2 11.25"/></g><g transform="translate(372 1131) scale(2)" stroke-width="1" stroke="#a8a8a8"><circle cx="8" cy="8" r="6.3"/><circle cx="8" cy="8" r="3.5"/><circle cx="8" cy="8" r="1" fill="currentColor" stroke="none"/></g></g>
<g transform="translate(421 1131) scale(2)" stroke-width="1"><circle cx="8" cy="12.5" r="2.5"/><path d="M1.6 12.5 H5.5 M10.5 12.5 H14.4"/><path d="M3.6 3.1 L8 7.2 L12.4 3.1"/><path d="M8 0.2 V7" stroke-dasharray="1 1"/></g>
<g transform="translate(469 1131) scale(2)" stroke-width="1" stroke="#b0b0b0"><circle cx="8" cy="12.5" r="2.5"/><path d="M1.6 12.5 H5.5 M10.5 12.5 H14.4"/><path d="M3.6 3.1 L8 7.2 L12.4 3.1"/><path d="M8 0.2 V7"/></g>
<g transform="translate(516.5 1131) scale(2)" stroke-width="1"><path d="M5.2 12.1 H4.4 C2.6 12.1 1.5 10.9 1.5 9.4 C1.5 8 2.5 6.9 3.9 6.8 C4.2 4.8 5.8 3.6 7.7 3.6 C9.6 3.6 11 4.7 11.5 6.3 C13.2 6.2 14.5 7.5 14.5 9.2 C14.5 10.8 13.3 12.1 11.7 12.1 H10.9" stroke-linejoin="round"/><path d="M8 14.2 V8.2 M5.6 10.5 L8 8.1 L10.4 10.5"/></g>
<g transform="translate(564 1131) scale(2)" stroke-width="1"><path d="M2 2.5 H5.5 V6"/><path d="M5.1 3.45 A5.5 5.5 0 1 0 9.7 2.77"/></g>
<g transform="translate(612 1131) scale(2)" stroke-width="1"><circle cx="3" cy="8" r="1" fill="currentColor" stroke="none"/><circle cx="8" cy="8" r="1" fill="currentColor" stroke="none"/><circle cx="13" cy="8" r="1" fill="currentColor" stroke="none"/></g>
</g></g>
<!-- sec_editor icons --><g><g color="#3b3b3b">
<ellipse cx="713.5" cy="159.6" rx="9.2" ry="5.8" stroke="#4f86a6" stroke-width="3.9"/>
<text x="710.6" y="169" font-family="Liberation Sans, sans-serif" font-weight="700" font-size="16.5" fill="#4f86a6" stroke="#f8f8f8" stroke-width="1" paint-order="stroke">R</text>
<circle cx="957.9" cy="161.2" r="11.1" fill="#5e9ab8" stroke="none"/><path d="M945.8 161.2 H970.0 M957.9 149.1 V173.29999999999998" stroke="#ffffff" stroke-width="2"/>
<path d="M1193.6 153.7 L1209.6 169.7 M1209.6 153.7 L1193.6 169.7"/>
<g transform="translate(2406.5 207) scale(2)" stroke-width="1"><path d="M-.7 6.5 L1.6 8.5 L-.7 10.5" stroke-width="0.9"/><rect x="3.8" y="2.4" width="8.6" height="4.2" rx="1"/><rect x="3.8" y="10.6" width="8.6" height="4" rx="1"/></g>
<g transform="translate(2644.1 207) scale(2)" stroke-width="1"><path d="M5.6 12.9 A6 6 0 1 1 10.4 12.9" stroke-width="1.25"/><path d="M8 15.6 V5.9 M4.9 8.9 L8 5.8 L11.1 8.9" stroke-width="1.25"/></g>
<g transform="translate(2695.7 207) scale(2)" stroke-width="1"><circle cx="3.3" cy="3.5" r="1.75"/><circle cx="12.5" cy="13.5" r="1.75"/><path d="M3.3 5.2 V10.5 Q3.3 12.6 5.4 12.6 H10 M8 10.6 L10.1 12.6 L8 14.7"/><path d="M12.5 11.8 V5.7 Q12.5 3.6 10.4 3.6 H6.6 M8.6 1.5 L6.5 3.6 L8.6 5.7"/></g>
<g transform="translate(2749.8 206) scale(2)" stroke-width="1"><rect x="1.85" y="3.25" width="11.3" height="11.3" rx="1"/><path d="M7.5 3.25 V14.55"/></g>
<g transform="translate(2799.5 207.3) scale(2)" stroke-width="1"><path d="M8.2 4.65 H2.4 V12.65 H13 V8.2"/><path d="M9.2 3.1 H13.8 V7.7 M13.7 3.2 L8.6 8.3"/></g>
<g transform="translate(2852 207) scale(2)" stroke-width="1"><circle cx="3" cy="8" r="1" fill="currentColor" stroke="none"/><circle cx="8" cy="8" r="1" fill="currentColor" stroke="none"/><circle cx="13" cy="8" r="1" fill="currentColor" stroke="none"/></g>
<rect x="703" y="212" width="26" height="21.8" rx="2.5"/><rect x="707.1" y="216" width="17.9" height="3.6" rx="0"/><path d="M706.1 224.1 H714 M706.1 229.9 H714"/><rect x="719.1" y="223.9" width="6" height="6" rx="0"/>
<circle cx="726.1" cy="274.3" r="11.1" fill="#5e9ab8" stroke="none"/><path d="M714.0 274.3 H738.2 M726.1 262.2 V286.40000000000003" stroke="#ffffff" stroke-width="2"/>
<path d="M926.1 265.8 L935.1 274.3 L926.1 282.8" stroke="#5c5c5c"/>
<g transform="translate(945.4 257.7) scale(2)" stroke-width="1.05" stroke="#652d90"><path d="M8 1.5 L13.8 4.7 V11.3 L8 14.6 L2.2 11.3 V4.7 Z M2.4 4.8 L8 8 L13.6 4.8 M8 8 V14.4" stroke-linejoin="round"/></g>
</g>
<path d="M810.3 656.0 L822.2 663.6 L810.3 671.2 Z" stroke="#919191" stroke-width="1.5" stroke-linejoin="round"/>
<path d="M810.3 938.0 L822.2 945.6 L810.3 953.2 Z" stroke="#919191" stroke-width="1.5" stroke-linejoin="round"/></g>
<!-- sec_right icons --><g><g color="#3b3b3b">
<g transform="translate(3081.4 143) scale(2)" stroke-width="1"><circle cx="3" cy="8" r="1" fill="currentColor" stroke="none"/><circle cx="8" cy="8" r="1" fill="currentColor" stroke="none"/><circle cx="13" cy="8" r="1" fill="currentColor" stroke="none"/></g>
<path d="M3250.8 154.7 V148.2 H3257.3 M3266.4 148.2 H3272.9 V154.7 M3272.9 163.3 V169.8 H3266.4 M3257.3 169.8 H3250.8 V163.3"/>
<path d="M3306 151.2 L3322 167.2 M3322 151.2 L3306 167.2"/>
<g transform="translate(2915.9 201.5) scale(2)" stroke-width="1"><path d="M3.2 5.6 L8 10.4 L12.8 5.6"/></g>
<path d="M2939.8 252.9 H2967.7"/><rect x="2940.8" y="257.2" width="6" height="6.3" rx="0"/><rect x="2950.75" y="257.2" width="6" height="6.3" rx="0"/><rect x="2960.7" y="257.2" width="6" height="6.3" rx="0"/><rect x="2940.8" y="270.7" width="6" height="6.3" rx="0"/><rect x="2950.75" y="270.7" width="6" height="6.3" rx="0"/><rect x="2960.7" y="270.7" width="6" height="6.3" rx="0"/>
<path d="M2979.3 262.2 H2989.3 Q2990.8 262.2 2989.5 263.8 L2985.3 268.8 Q2984.3 269.59999999999997 2983.3 268.8 L2979.1000000000004 263.8 Q2977.8 262.2 2979.3 262.2Z" fill="#3b3b3b" stroke="none"/>
<path d="M3021.2 276.5 V256 M3015.3 262 L3021.2 255.8 L3027.1 262 M3034.7 255 V275.6 M3028.8 269.6 L3034.7 275.8 L3040.6 269.6"/>
<path d="M3053.7 262.2 H3063.7 Q3065.2 262.2 3063.8999999999996 263.8 L3059.7 268.8 Q3058.7 269.59999999999997 3057.7 268.8 L3053.5 263.8 Q3052.2 262.2 3053.7 262.2Z" fill="#3b3b3b" stroke="none"/>
<path d="M3259.5 257 A11.8 11.8 0 1 0 3263.6 269.6" stroke-width="2.2"/><path d="M3256.8 262.2 A5.6 5.6 0 1 0 3257.6 268.3" stroke-width="2.2"/><path d="M3255.5 261.5 L3262.8 259.8 L3261.8 253.4" stroke-width="2" stroke-linejoin="round"/>
<path d="M3303.8 256.7 H3331.8 M3303.8 262.9 H3331.8 M3303.8 269.09999999999997 H3319.5 M3303.8 275.3 H3319.5 M3322.8 268.8 L3330.6000000000004 276.59999999999997 M3330.6000000000004 268.8 L3322.8 276.59999999999997" stroke="#3b3b3b"/>
<path d="M3026.0 316.8 H3036.0 Q3037.5 316.8 3036.2 318.40000000000003 L3032 323.40000000000003 Q3031 324.2 3030 323.40000000000003 L3025.8 318.40000000000003 Q3024.5 316.8 3026.0 316.8Z" fill="#3b3b3b" stroke="none"/>
<g transform="translate(2915.9 1131.9) scale(2)" stroke-width="1"><path d="M3.2 5.6 L8 10.4 L12.8 5.6"/></g>
<path d="M2951.8 1196.0 L2964.3 1184.4 V1190.9 H2976.2000000000003 Q2980.2000000000003 1190.9 2980.2000000000003 1196.0 Q2980.2000000000003 1201.1000000000001 2976.2000000000003 1201.1000000000001 H2964.3 V1207.6000000000001 Z" stroke="#bdbdbd" stroke-linejoin="round"/>
<path d="M3032.3 1196.0 L3019.8 1184.4 V1190.9 H3007.5 Q3003.5 1190.9 3003.5 1196.0 Q3003.5 1201.1000000000001 3007.5 1201.1000000000001 H3019.8 V1207.6000000000001 Z" stroke="#bdbdbd" stroke-linejoin="round"/>
<rect x="3218.2" y="1185.1" width="9.9" height="21.6" rx="2.5"/><rect x="3234.4" y="1185.1" width="8.1" height="7.4" rx="2.2"/><rect x="3234.4" y="1199.5" width="8.1" height="7.2" rx="2.2"/>
<path d="M3255.0 1192.1 H3265.0 Q3266.5 1192.1 3265.2 1193.6999999999998 L3261 1198.6999999999998 Q3260 1199.5 3259 1198.6999999999998 L3254.8 1193.6999999999998 Q3253.5 1192.1 3255.0 1192.1Z" fill="#3b3b3b" stroke="none"/>
<path d="M3303.8 1186.7 H3331.8 M3303.8 1192.9 H3331.8 M3303.8 1199.1000000000001 H3319.5 M3303.8 1205.3 H3319.5 M3322.8 1198.8 L3330.6000000000004 1206.6000000000001 M3330.6000000000004 1198.8 L3322.8 1206.6000000000001" stroke="#b9b9b9"/>
</g></g>
<!-- sec_panel icons --><g><g color="#3b3b3b">
<path d="M2590.2 1462.1 H2616 M2603.1 1449.1 V1475.1"/>
<path d="M2629.0 1459.8 L2636.1 1467.2 L2643.2 1459.8" stroke-width="1.8"/>
<path d="M2698.3 1462.8999999999999 H2720.1"/>
<path d="M2751.2000000000003 1453.3999999999999 L2768.6 1470.8 M2768.6 1453.3999999999999 L2751.2000000000003 1470.8"/>
<rect x="2803.2" y="1457.3" width="15.6" height="15.3" rx="0"/><path d="M2807.3 1457 V1453.2 H2822.9 V1468.6 H2819"/>
<rect x="2855.2" y="1453.2" width="17.6" height="17.4" rx="0"/>
<path d="M696.7 1535.4 V1515 H706.5 L709 1517.5 H723.5 V1535.4 Z M696.7 1522.3 H706 L709 1519.7 H723.5"/>
<path d="M2582.9 1519.0 A11.5 11.5 0 1 0 2582.5 1531.1" stroke-width="3"/>
<path d="M2585.8 1511.6 V1521.3 H2575.6" stroke-width="2.6"/>
<path d="M2624.4 1514.8 H2647.8 M2630.4 1514.5 V1512.6 Q2630.4 1511.2 2631.8 1511.2 H2640.2 Q2641.6 1511.2 2641.6 1512.6 V1514.5 M2627.2 1515 V1533.6 Q2627.2 1536 2629.6 1536 H2642.8 Q2645.2 1536 2645.2 1533.6 V1515 M2633 1520.2 V1531.7 M2639.1 1520.2 V1531.7" stroke-width="2.4"/>
<circle cx="2683.7" cy="1523.7" r="12.4"/>
<path d="M2683.7 1522.3 V1530.4" stroke-width="2.8"/><circle cx="2683.7" cy="1518.6" r="1.7" fill="#3b3b3b" stroke="none"/>
<text x="2731.2" y="1521.6" font-family="Liberation Sans, sans-serif" font-weight="400" font-size="14.5" fill="#3b3b3b" stroke="#3b3b3b" stroke-width=".4" textLength="15" lengthAdjust="spacingAndGlyphs">ab</text>
<text x="2731.2" y="1533.8" font-family="Liberation Sans, sans-serif" font-weight="400" font-size="14.5" fill="#3b3b3b" stroke="#3b3b3b" stroke-width=".4" textLength="6.6" lengthAdjust="spacingAndGlyphs">c</text>
<path d="M2750.6 1518.7 H2759.1 V1530.9 H2744.6 M2750 1525.4 L2744.3 1530.9 L2750 1536.4"/>
<path d="M2802.8 1522.5 V1518 Q2802.8 1514.5 2806.3 1514.5 H2817.6 Q2821.2 1514.5 2821.2 1518 V1533.8 H2801.8 M2802.8 1518 H2821.2" stroke="#4a4a4a" stroke-width="1.6"/>
<path d="M2795.3 1531.3 L2800.2 1526.4 L2797.6 1523.9 H2805.2 V1531.4 L2802.7 1528.9 L2797.8 1533.8 Z" stroke="#4a4a4a" stroke-width="1.3" stroke-linejoin="round"/>
<path d="M2856.2 1514.4 H2884.0 M2856.2 1520.8000000000002 H2884.0 M2856.2 1527.2 H2871.7999999999997 M2856.2 1533.5 H2871.7999999999997 M2875.2 1526.6000000000001 L2883.0 1534.4 M2883.0 1526.6000000000001 L2875.2 1534.4" stroke="#3b3b3b"/>
</g></g>
<!-- sec_status icons --><g><g color="#3b3b3b">
<path d="M25.9 2072.7 L34.1 2080.6 L25.9 2088.6 M42.5 2066.3 L34.6 2073.8 L42.5 2081.4" stroke="#fff" stroke-width="1.9"/>
<circle cx="91.9" cy="2068.4" r="2.75" stroke-width="1.7"/><circle cx="104.3" cy="2073.4" r="2.75" stroke-width="1.7"/><circle cx="91.9" cy="2088.1" r="2.75" stroke-width="1.7"/><path d="M91.9 2071.2 V2085.3 M104.2 2076.2 C103.8 2080.2 100.8 2081 98 2081 C94.6 2081 92.2 2082.4 91.9 2085.3" stroke-width="1.7"/>
<g transform="translate(196.275 2063.7) scale(1.75)" stroke-width="1.0"><path d="M5.2 12.1 H4.4 C2.6 12.1 1.5 10.9 1.5 9.4 C1.5 8 2.5 6.9 3.9 6.8 C4.2 4.8 5.8 3.6 7.7 3.6 C9.6 3.6 11 4.7 11.5 6.3 C13.2 6.2 14.5 7.5 14.5 9.2 C14.5 10.8 13.3 12.1 11.7 12.1 H10.9" stroke-linejoin="round"/><path d="M8 14.2 V8.2 M5.6 10.5 L8 8.1 L10.4 10.5"/></g>
<circle cx="270.2" cy="2078.6" r="11" stroke-width="1.8"/><path d="M265.3 2073.7 L275.09999999999997 2083.5 M275.09999999999997 2073.7 L265.3 2083.5" stroke-width="1.8"/>
<path d="M327 2067.5 L338 2087.2 H316 Z" stroke-width="1.8" stroke-linejoin="round"/><path d="M327 2074.3 V2081" stroke-width="2"/><circle cx="327" cy="2084" r="1.2" fill="#3b3b3b" stroke="none"/>
<path d="M3103.5 2069.8 Q3100.2 2069.8 3100.2 2072.8 V2075.6 Q3100.2 2078.4 3097.4 2078.5 Q3100.2 2078.6 3100.2 2081.4 V2084.2 Q3100.2 2087.2 3103.5 2087.2 M3109.6 2069.8 Q3112.9 2069.8 3112.9 2072.8 V2075.6 Q3112.9 2078.4 3115.7 2078.5 Q3112.9 2078.6 3112.9 2081.4 V2084.2 Q3112.9 2087.2 3109.6 2087.2" stroke-width="1.7"/>
<path d="M3249 2084 Q3244 2082.5 3244.3 2078.5 Q3244.6 2075.5 3247.5 2074.8 Q3246.5 2067.5 3253.5 2067.4 Q3255.5 2067.4 3256.7 2068.6 Q3258 2067.3 3260.5 2067.4 Q3266.8 2067.8 3265.7 2074.8" stroke-width="2"/><path d="M3252 2067.8 Q3256.8 2069.5 3256.5 2073.5 Q3256 2077.8 3251 2077.5 Q3247.2 2077 3247.4 2073" stroke-width="2.1"/><path d="M3245.2 2082.3 Q3246.5 2088 3251.6 2088.6" stroke-width="3"/>
<circle cx="3261.7" cy="2083.4" r="6.9" stroke-width="1.7"/><path d="M3258.7 2080.4 L3264.7 2086.4 M3264.7 2080.4 L3258.7 2086.4" stroke-width="1.9"/>
<path d="M3307.3 2085.6 H3324.9 L3322.9 2082.2 V2076 Q3322.9 2067.5 3316.1 2067.4 Q3309.3 2067.5 3309.3 2076 V2082.2 Z" stroke-width="1.8" stroke-linejoin="round"/><path d="M3313.7 2086 Q3313.9 2088.9 3316.1 2088.9 Q3318.3 2088.9 3318.5 2086" stroke-width="1.7"/>
</g></g>
</svg>
</body></html>
